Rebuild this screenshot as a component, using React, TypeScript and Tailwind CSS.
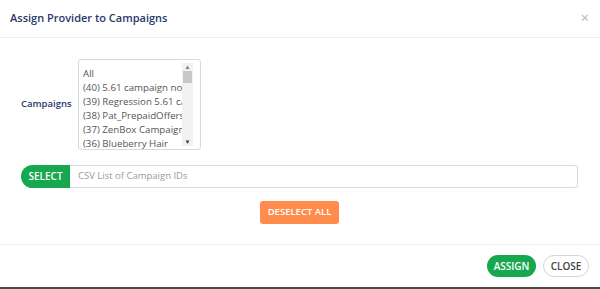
const campaigns = [
    'All',
    '(40) 5.61 campaign no tracking',
    '(39) Regression 5.61 campaign',
    '(38) Pat_PrepaidOffers',
    '(37) ZenBox Campaign',
    '(36) Blueberry Hair',
    '(35) Test Campaign',
];

export default function App() {
    return (
        <div className="w-[600px] h-[289px] bg-[#4a4a4a] flex flex-col" style={{ fontFamily: '"Open Sans", "Noto Sans", sans-serif' }}>
            <div className="h-[287px] bg-white flex flex-col">
                {/* Header */}
                <div className="h-[38px] flex items-center justify-between pl-[10px] pr-[11px] border-b border-[#eceef1]">
                    <h2 className="text-[11px] font-semibold text-[#28396a]">Assign Provider to Campaigns</h2>
                    <button className="text-[#b8b8b8] text-[15px] leading-none mt-[-2px]">×</button>
                </div>

                {/* Body */}
                <div className="flex-1 flex flex-col pl-[21px] pr-[22px] pt-[21px]">
                    <div className="flex items-center">
                        <label className="w-[57px] text-[9.5px] font-semibold text-[#28396a]">Campaigns</label>
                        <div className="w-[123px] h-[91px] border border-[#d9d9d9] rounded-[3px] flex overflow-hidden">
                            <div className="w-[104px] pl-[4px] pt-[7px] overflow-hidden">
                                {campaigns.map((c) => (
                                    <div key={c} className="text-[9.7px] leading-[14px] text-[#555] whitespace-nowrap overflow-hidden">{c}</div>
                                ))}
                            </div>
                            <div className="w-[11px] mr-[7px] mt-[3px] mb-[3px] bg-[#f1f1f1] flex flex-col items-center">
                                <div className="h-[8px] text-[6px] leading-[8px] text-[#777]">▲</div>
                                <div className="w-[9px] h-[12px] bg-[#c8c8c8]"></div>
                                <div className="flex-1"></div>
                                <div className="h-[8px] text-[6px] leading-[8px] text-[#333]">▼</div>
                            </div>
                        </div>
                    </div>

                    <div className="flex h-[23px] mt-[15px]">
                        <button className="w-[49px] bg-[#17a84f] text-white text-[10px] font-semibold rounded-l-full">SELECT</button>
                        <input
                            className="flex-1 border border-[#dcdcdc] border-l-0 rounded-r-[3px] px-[8px] text-[9.5px] text-[#555] placeholder-[#9a9a9a] outline-none"
                            placeholder="CSV List of Campaign IDs"
                        />
                    </div>

                    <div className="flex justify-center mt-[13px]">
                        <button className="w-[79px] h-[23px] bg-[#ff8c4c] text-white text-[9.5px] font-semibold rounded-[3px]">DESELECT ALL</button>
                    </div>
                </div>

                {/* Footer */}
                <div className="h-[43px] border-t border-[#eceef1] flex items-center justify-end gap-[7px] pr-[11px]">
                    <button className="w-[49px] h-[22px] bg-[#17a84f] text-white text-[10px] font-semibold rounded-full">ASSIGN</button>
                    <button className="w-[46px] h-[22px] bg-white border border-[#d6d6d6] text-[#444] text-[10px] font-semibold rounded-full">CLOSE</button>
                </div>
            </div>
        </div>
    );
}
